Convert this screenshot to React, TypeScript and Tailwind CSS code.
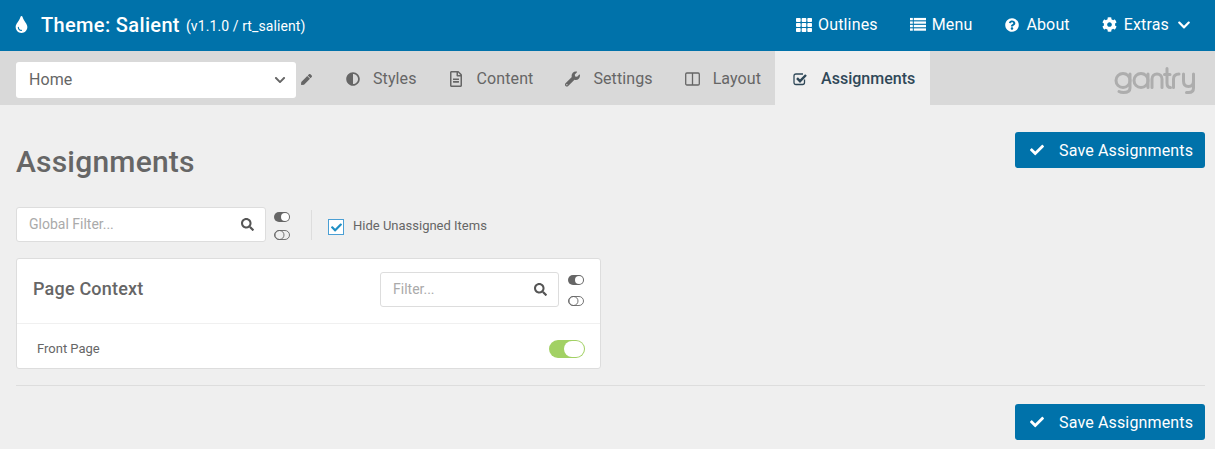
import { ReactNode } from "react";
import {
  FaAdjust,
  FaCheck,
  FaChevronDown,
  FaCog,
  FaPen,
  FaQuestionCircle,
  FaRegFileAlt,
  FaSearch,
  FaTh,
  FaTint,
  FaWrench,
} from "react-icons/fa";

const ListIcon = () => (
  <svg width="17" height="15" viewBox="0 0 17 15" fill="currentColor">
    <rect x="0" y="0.500" width="3" height="2.500" />
    <rect x="4" y="0.500" width="13" height="2.500" />
    <rect x="0" y="4.200" width="3" height="2.500" />
    <rect x="4" y="4.200" width="13" height="2.500" />
    <rect x="0" y="7.900" width="3" height="2.500" />
    <rect x="4" y="7.900" width="13" height="2.500" />
    <rect x="0" y="11.600" width="3" height="2.500" />
    <rect x="4" y="11.600" width="13" height="2.500" />
  </svg>
);

const ColumnsIcon = () => (
  <svg width="15" height="14" viewBox="0 0 15 14" fill="none" stroke="currentColor" strokeWidth="1.300">
    <rect x="0.700" y="1" width="13.600" height="12" rx="1.200" />
    <path d="M7.500 1v12" />
  </svg>
);

const CheckSquareIcon = () => (
  <svg width="15" height="14" viewBox="0 0 15 14" fill="none" stroke="currentColor">
    <path d="M11.500 7.500v3c0 1.300-.8 2-2 2H3c-1.300 0-2-.7-2-2V4c0-1.300.7-2 2-2h7" strokeWidth="1.300" />
    <path d="M4 6.200l3 3 6-6.200" strokeWidth="2.400" />
  </svg>
);

const TopLink = ({ icon, label, after }: { icon: ReactNode; label: string; after?: ReactNode }) => (
  <a className="flex items-center text-[16px] font-normal tracking-[0.15px] text-white">
    <span className="mr-[6px] flex w-[16px] justify-center">{icon}</span>
    {label}
    {after}
  </a>
);

const NavTab = ({ icon, label, active }: { icon: ReactNode; label: string; active?: boolean }) => (
  <a
    className={
      active
        ? "-ml-[2px] flex h-full items-center bg-[#efefef] pl-[18px] pr-[15px] pt-px text-[16px] font-medium text-[#2f4858]"
        : "flex h-full items-center px-[16px] pt-px text-[16px] tracking-[0.1px] text-[#666666]"
    }
  >
    <span className="mr-[13px] flex w-[15px] justify-center">{icon}</span>
    {label}
  </a>
);

const ToggleAll = ({ gapClass }: { gapClass: string }) => (
  <div className={`flex flex-col ${gapClass}`}>
    <span className="flex h-[10px] w-[16px] items-center justify-end rounded-full bg-[#666666] pr-px">
      <span className="h-[8px] w-[8px] rounded-full bg-white" />
    </span>
    <svg width="16" height="10" viewBox="0 0 16 10" fill="none" stroke="#666666" strokeWidth="0.900">
      <rect x="0.500" y="0.500" width="15" height="9" rx="4.500" />
      <circle cx="5.500" cy="5" r="4.500" />
    </svg>
  </div>
);

const SearchBox = ({ placeholder, className }: { placeholder: string; className: string }) => (
  <div
    className={`flex h-[35px] items-center justify-between rounded-[3px] border border-[#dddddd] bg-white pl-[12px] pr-[11px] ${className}`}
  >
    <span className="text-[14px] text-[#aaaaaa]">{placeholder}</span>
    <FaSearch className="h-[13px] w-[13px] text-[#555555]" />
  </div>
);

const SaveButton = () => (
  <button className="flex h-[36px] w-[190px] items-center rounded-[3px] bg-[#0072aa] pl-[15px] text-[16px] tracking-[0.15px] text-white">
    <FaCheck className="mr-[15px] h-[14px] w-[14px]" />
    <span className="pt-px">Save Assignments</span>
  </button>
);

const GantryLogo = () => (
  <svg
    className="mt-[4px]"
    width="82"
    height="28"
    viewBox="0 0 82 28"
    fill="none"
    stroke="#adadad"
    strokeWidth="3"
    strokeLinecap="round"
  >
    <circle cx="9" cy="14.500" r="7" />
    <path d="M16 8v14c0 3-2.500 4.500-6.500 4.500-2 0-3.500-.4-4.500-1" />
    <circle cx="27" cy="14.500" r="7" />
    <path d="M34 8v13.500" />
    <path d="M38 21.500V13c0-3 2.200-5 5-5s5 2 5 5v8.500" />
    <path d="M53 2.500V17c0 3 1.400 4.500 3.500 4.500M50.500 8.500H56" />
    <path d="M59.500 21.500V13c0-3 2-5 5.500-5" />
    <path d="M69.500 8v7c0 3.500 2 5.500 5 5.500s5-2 5-5.500V8M79.500 15v7c0 3-2 4.500-5 4.500h-2" />
  </svg>
);

export default function App() {
  return (
    <div className="h-[449px] w-[1218px] overflow-hidden bg-white font-['Roboto',sans-serif]">
      <div className="h-full w-[1215px] bg-[#efefef]">
        <header className="flex h-[51px] items-center justify-between bg-[#0072aa] pb-[2px] pl-[13px] pr-[24px] text-white">
          <div className="flex items-center">
            <FaTint className="mr-[11px] h-[17px] w-[17px]" />
            <span className="text-[20px] font-medium tracking-[0.35px]">Theme: Salient</span>
            <span className="ml-[6px] mt-[3px] text-[14px] tracking-[0.1px]">(v1.1.0 / rt_salient)</span>
          </div>
          <nav className="flex items-center gap-[32px]">
            <TopLink icon={<FaTh className="h-[16px] w-[16px]" />} label="Outlines" />
            <TopLink icon={<ListIcon />} label="Menu" />
            <TopLink icon={<FaQuestionCircle className="h-[14px] w-[14px]" />} label="About" />
            <TopLink
              icon={<FaCog className="h-[15px] w-[15px]" />}
              label="Extras"
              after={<FaChevronDown className="ml-[8px] h-[14px] w-[14px]" />}
            />
          </nav>
        </header>

        <div className="flex h-[54px] items-center justify-between bg-[#d9d9d9] pl-[16px] pr-[19px]">
          <div className="flex h-full items-center">
            <div className="mt-[3px] flex h-[36px] w-[280px] items-center justify-between rounded-[3px] bg-white pl-[13px] pr-[10px] text-[16px] tracking-[0.1px] text-[#666666]">
              Home
              <FaChevronDown className="h-[12px] w-[12px]" />
            </div>
            <FaPen className="ml-[5px] mr-[17px] mt-[3px] h-[11px] w-[11px] text-[#666666]" />
            <NavTab icon={<FaAdjust className="h-[14px] w-[14px]" />} label="Styles" />
            <NavTab icon={<FaRegFileAlt className="h-[16px] w-[14px]" />} label="Content" />
            <NavTab icon={<FaWrench className="h-[16px] w-[16px]" />} label="Settings" />
            <NavTab icon={<ColumnsIcon />} label="Layout" />
            <NavTab active icon={<CheckSquareIcon />} label="Assignments" />
          </div>
          <GantryLogo />
        </div>

        <main className="pl-[16px] pr-[10px]">
          <div className="flex items-start justify-between">
            <h1 className="mt-[38px] text-[30px] font-medium leading-[38px] tracking-[0.2px] text-[#666666]">
              Assignments
            </h1>
            <div className="mt-[27px]">
              <SaveButton />
            </div>
          </div>

          <div className="mt-[26px] flex items-center">
            <SearchBox placeholder="Global Filter..." className="w-[250px]" />
            <div className="ml-[8px] mt-[3px]">
              <ToggleAll gapClass="gap-[8px]" />
            </div>
            <div className="ml-[21px] h-[30px] w-px bg-[#dddddd]" />
            <span className="ml-[16px] mt-[5px] flex h-[16px] w-[16px] items-center justify-center border border-[#4a9fd4] bg-white">
              <FaCheck className="h-[11px] w-[11px] text-[#1f8fc4]" />
            </span>
            <span className="ml-[9px] mt-[2px] text-[13px] text-[#666666]">Hide Unassigned Items</span>
          </div>

          <section className="mt-[16px] w-[585px] rounded-[3px] border border-[#dddddd] bg-white">
            <div className="flex h-[65px] items-center justify-between border-b border-[#f0f0f0] pl-[16px] pr-[16px]">
              <h2 className="mb-[6px] text-[18px] font-medium tracking-[0.2px] text-[#666666]">Page Context</h2>
              <div className="flex items-center gap-[9px]">
                <div className="mb-[3px]">
                  <SearchBox placeholder="Filter..." className="w-[179px]" />
                </div>
                <div className="mb-[2px]">
                  <ToggleAll gapClass="gap-[11px]" />
                </div>
              </div>
            </div>
            <div className="flex h-[44px] items-center justify-between pl-[20px] pr-[15px] pt-[6px]">
              <span className="text-[13px] text-[#666666]">Front Page</span>
              <span className="flex h-[18px] w-[36px] items-center justify-end rounded-full bg-[#a2d164] pr-px">
                <span className="h-[16px] w-[20px] rounded-full bg-white" />
              </span>
            </div>
          </section>

          <div className="mt-[16px] h-px bg-[#dddddd]" />

          <div className="mt-[18px] flex justify-end">
            <SaveButton />
          </div>
        </main>
      </div>
    </div>
  );
}
